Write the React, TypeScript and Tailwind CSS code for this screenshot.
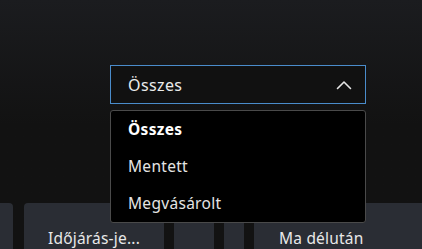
import { useState } from "react";

const options = ["Összes", "Mentett", "Megvásárolt"];

function ChevronUp() {
  return (
    <svg width="16" height="10" viewBox="0 0 16 10" fill="none" aria-hidden>
      <path d="M1.5 8.5 L8 2 L14.5 8.5" stroke="#e6e6e6" strokeWidth="1.6" strokeLinecap="round" strokeLinejoin="round" />
    </svg>
  );
}

export default function App() {
  const [selected] = useState("Összes");
  return (
    <div className="relative h-[249px] w-[422px] overflow-hidden bg-gradient-to-b from-[#1b1c1f] via-[#121212] to-[#121212] font-['Noto_Sans',sans-serif] text-[#e8e8e8]">
      <div className="pt-[65px] pl-[110px]">
        <div className="relative w-[256px]">
          <button className="flex h-[39px] w-full items-center justify-between border border-[#4a8ccb] bg-[#111111] pl-[17px] pr-[13px] text-[16px] tracking-[0.4px] text-[#ececec]">
            <span>{selected}</span>
            <ChevronUp />
          </button>
          <ul className="absolute left-0 top-[45px] z-10 w-full rounded-[3px] border border-[#4a4a4a] bg-black">
            {options.map((o) => (
              <li
                key={o}
                className={`flex h-[37px] items-center pl-[17px] text-[15.5px] tracking-[0.3px] ${
                  o === selected ? "font-bold text-white" : "text-[#e4e4e4]"
                }`}
              >
                {o}
              </li>
            ))}
          </ul>
        </div>
      </div>

      <div className="mt-[99px] flex gap-[10px] -ml-[127px]">
        <div className="h-[60px] w-[140px] shrink-0 rounded-t-[4px] bg-[#2a2d34]" />
        <div className="flex h-[60px] w-[140px] shrink-0 ml-[1px] justify-center rounded-t-[4px] bg-[#2a2d34] pt-[24px] text-[15.5px] tracking-[0.2px]">
          Időjárás-je...
        </div>
        <div className="h-[60px] w-[40px] shrink-0 rounded-t-[4px] bg-[#2a2d34]" />
        <div className="h-[60px] w-[20px] shrink-0 rounded-t-[4px] bg-[#2a2d34]" />
        <div className="flex h-[60px] w-[200px] shrink-0 rounded-t-[4px] bg-[#2a2d34] pl-[25px] pt-[24px] text-[15.5px] tracking-[0.2px]">
          Ma délután
        </div>
      </div>
    </div>
  );
}
